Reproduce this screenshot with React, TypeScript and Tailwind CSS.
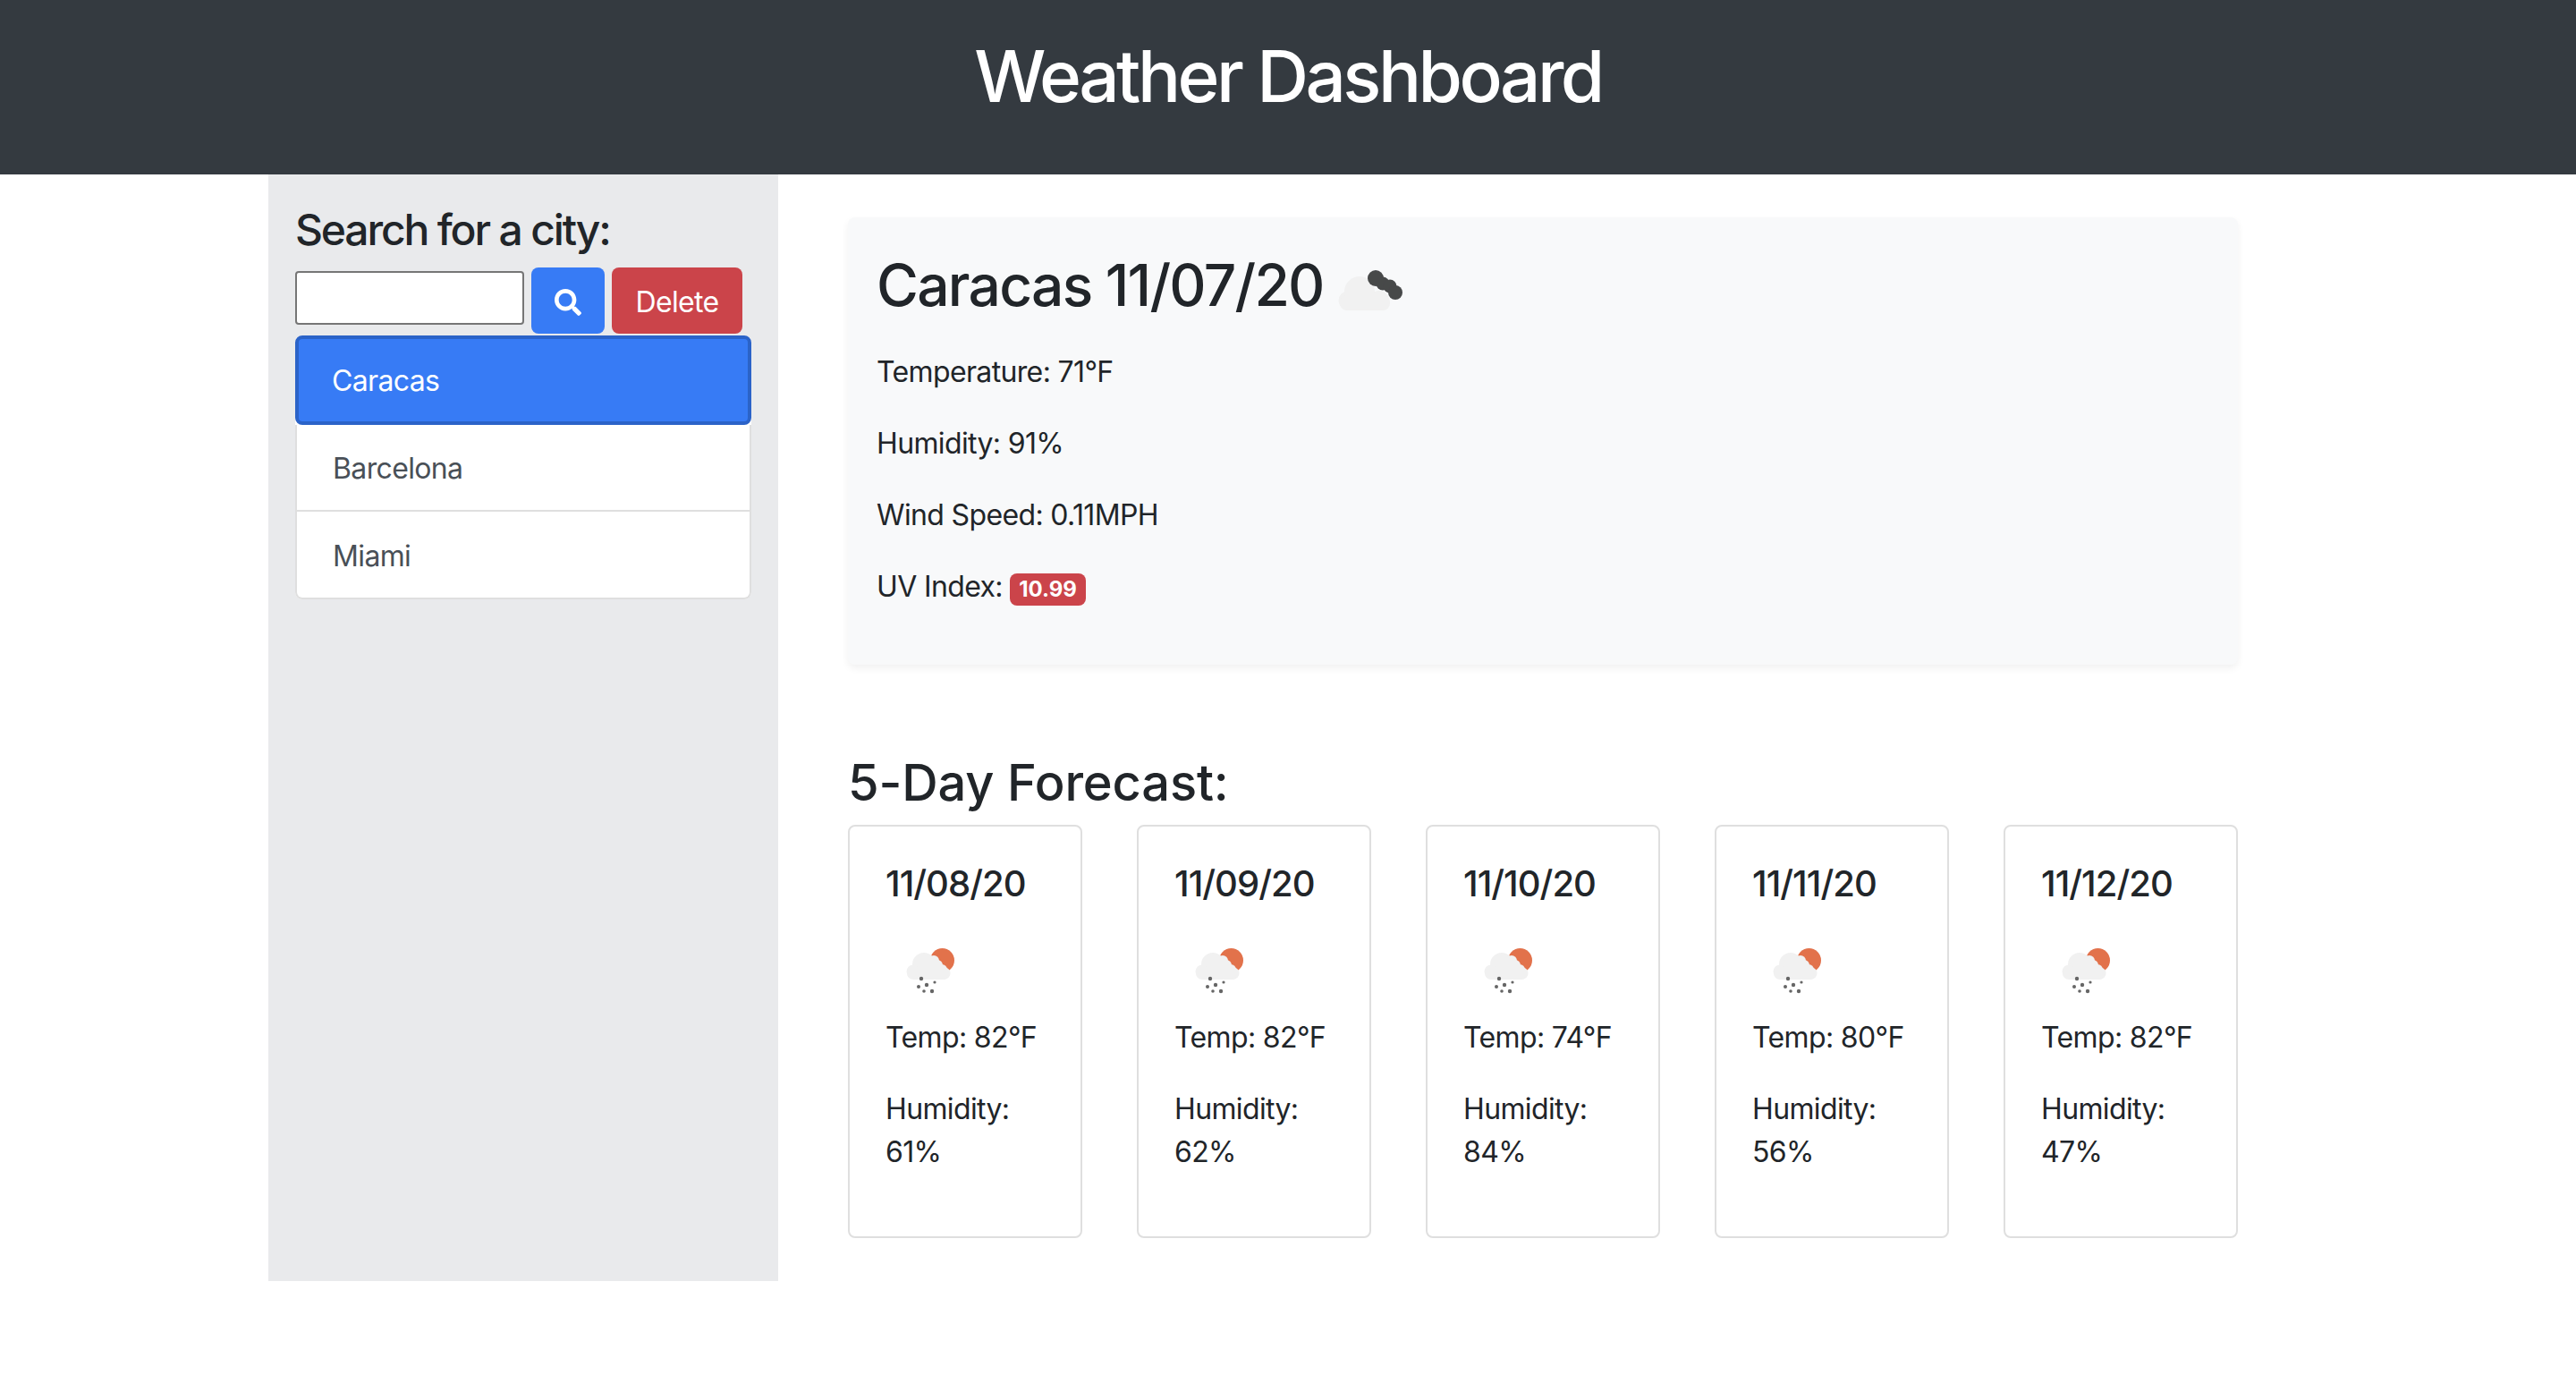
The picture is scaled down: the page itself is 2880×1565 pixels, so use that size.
import { FaSearch } from "react-icons/fa";

const forecast = [
  { date: "11/08/20", temp: "82", humidity: "61" },
  { date: "11/09/20", temp: "82", humidity: "62" },
  { date: "11/10/20", temp: "74", humidity: "84" },
  { date: "11/11/20", temp: "80", humidity: "56" },
  { date: "11/12/20", temp: "82", humidity: "47" },
];

function RainIcon() {
  return (
    <svg viewBox="0 0 100 100" className="w-[100px] h-[100px] block">
      <defs>
        <filter id="soft-rain">
          <feGaussianBlur stdDeviation="0.5" />
        </filter>
      </defs>
      <g filter="url(#soft-rain)">
        <circle cx="63.5" cy="37.5" r="13.5" fill="#e2724c" />
        <g fill="#f1f1f1">
          <circle cx="43" cy="42" r="13" />
          <circle cx="31" cy="50" r="7.5" />
          <circle cx="54" cy="38" r="6" />
          <circle cx="58" cy="43" r="6" />
          <circle cx="63" cy="48" r="6" />
          <circle cx="66" cy="52" r="6.5" />
          <rect x="24" y="45" width="48" height="14" rx="7" />
        </g>
        <g fill="#666666">
          <circle cx="40" cy="58" r="2.2" />
          <circle cx="46" cy="65" r="2.2" />
          <circle cx="55" cy="62" r="1.6" />
          <circle cx="37" cy="67" r="2" />
          <circle cx="43" cy="72" r="1.8" />
          <circle cx="52" cy="72" r="2.2" />
        </g>
      </g>
    </svg>
  );
}

function HazeIcon() {
  return (
    <svg viewBox="0 0 100 100" className="w-[100px] h-[100px] block shrink-0">
      <defs>
        <filter id="soft-haze">
          <feGaussianBlur stdDeviation="0.6" />
        </filter>
      </defs>
      <g filter="url(#soft-haze)">
        <g fill="#f1f1f1">
          <circle cx="40" cy="46" r="17" />
          <circle cx="27" cy="56" r="10.5" />
          <circle cx="62" cy="56" r="11" />
          <rect x="18" y="50" width="56" height="17" rx="8" />
        </g>
        <g fill="#47484a">
          <circle cx="58" cy="31" r="9" />
          <circle cx="66" cy="37" r="7.5" />
          <circle cx="74" cy="40" r="7.5" />
          <circle cx="80" cy="47" r="8" />
        </g>
      </g>
    </svg>
  );
}

export default function App() {
  return (
    <div className="min-h-[1565px] bg-white text-[#212529] text-[32px] leading-[48px] tracking-[-0.02em] font-['Inter',sans-serif]">
      <header className="h-[195px] bg-[#343a40] pt-[37px]">
        <h1 className="text-center text-white text-[80px] leading-[96px] font-[550] tracking-[-0.044em]">Weather Dashboard</h1>
      </header>

      <div className="mx-auto w-[2280px] flex">
        <aside className="w-[570px] h-[1237px] bg-[#e9eaec] pl-[30px] pt-[33px]">
          <h4 className="text-[48px] leading-[58px] font-[550] tracking-[-0.045em] mb-[13px]">Search for a city:</h4>
          <div className="flex items-start">
            <input className="w-[256px] h-[60px] mt-[4px] bg-white border-2 border-[#767676] rounded-[4px]" />
            <button className="ml-[8px] w-[82px] h-[74px] pt-[3px] bg-[#377bf5] rounded-[8px] text-white flex items-center justify-center">
              <FaSearch className="w-[30px] h-[30px]" />
            </button>
            <button className="ml-[8px] w-[146px] h-[74px] pt-[3px] bg-[#cb444a] rounded-[8px] text-white">Delete</button>
          </div>
          <ul className="w-[510px] mt-[2px] rounded-[8px] bg-white">
            <li className="h-[100px] px-[37px] pt-[2px] flex items-center bg-[#377bf5] border-[4px] border-[#2b63c8] rounded-[8px] text-white">
              Caracas
            </li>
            <li className="h-[97px] px-[40px] pt-[2px] flex items-center border-x-2 border-b-2 border-[#dfdfdf] text-[#495057]">
              Barcelona
            </li>
            <li className="h-[98px] px-[40px] pt-[3px] flex items-center border-x-2 border-b-2 border-[#dfdfdf] rounded-b-[8px] text-[#495057]">
              Miami
            </li>
          </ul>
        </aside>

        <main className="w-[1554px] ml-[78px] pt-[48px]">
          <section className="h-[500px] bg-[#f8f9fa] rounded-[8px] shadow-[0_4px_8px_rgba(0,0,0,0.06)] pl-[32px] pt-[37px]">
            <div className="flex items-start h-[77px] mb-[35px]">
              <h2 className="text-[64px] leading-[77px] font-[550] tracking-[-0.027em] w-[500px] whitespace-nowrap">Caracas 11/07/20</h2>
              <HazeIcon />
            </div>
            <p className="mb-[32px]">Temperature: 71°F</p>
            <p className="mb-[32px]">Humidity: 91%</p>
            <p className="mb-[32px]">Wind Speed: 0.11MPH</p>
            <p>
              UV Index:{" "}
              <span className="inline-block bg-[#cb444a] text-white text-[24px] leading-[36px] font-bold tracking-normal px-[10px] rounded-[8px]">
                10.99
              </span>
            </p>
          </section>

          <h3 className="text-[56px] leading-[67px] font-[550] tracking-[-0.003em] mt-[99px] mb-[13px]">5-Day Forecast:</h3>

          <div className="flex justify-between">
            {forecast.map((day) => (
              <div key={day.date} className="w-[262px] h-[462px] border-2 border-[#dfdfdf] rounded-[8px] p-[40px]">
                <h5 className="text-[40px] leading-[48px] font-[550] tracking-[-0.024em] mb-[24px]">{day.date}</h5>
                <RainIcon />
                <p className="mb-[32px]">Temp: {day.temp}°F</p>
                <p>Humidity: {day.humidity}%</p>
              </div>
            ))}
          </div>
        </main>
      </div>
    </div>
  );
}
